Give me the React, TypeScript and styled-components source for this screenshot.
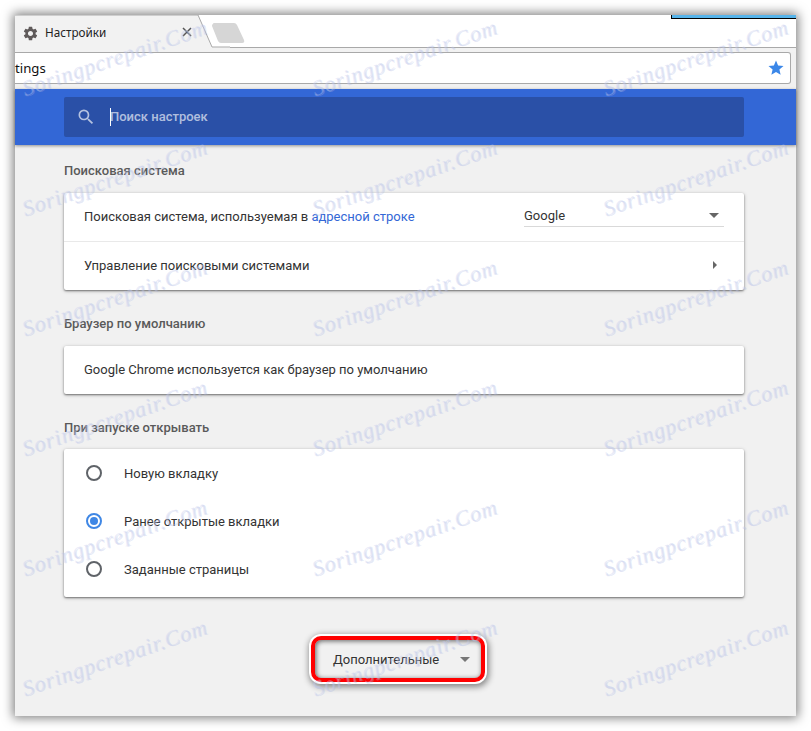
import React from "react";
import styled, { createGlobalStyle } from "styled-components";
import { MdSettings, MdStar, MdSearch } from "react-icons/md";

const Global = createGlobalStyle`
  html, body { margin: 0; padding: 0; background: #fff; }
  body { font-family: Roboto, "Noto Sans", sans-serif; }
`;

const Page = styled.div`
  position: relative;
  width: 811px;
  height: 731px;
  padding: 15px;
  box-sizing: border-box;
  overflow: hidden;
  background: #fff;
`;

const Window = styled.div`
  position: relative;
  width: 781px;
  height: 701px;
  display: flex;
  flex-direction: column;
  background: #f1f1f1;
  box-shadow: 0 0 10px 2px rgba(0, 0, 0, 0.5);
`;

const TabStrip = styled.div`
  position: relative;
  height: 37px;
  flex: none;
  background: linear-gradient(#fff 32px, #a9a9a9 32px, #a9a9a9 33px, #f2f2f2 33px);
`;

const TabShape = styled.svg`
  position: absolute;
  left: 0;
  top: 0;
`;

const Tab = styled.div`
  position: relative;
  width: 190px;
  height: 37px;
  display: flex;
  align-items: center;
  padding-left: 7px;
  box-sizing: border-box;
  color: #333;
`;

const TabTitle = styled.span`
  margin-left: 6px;
  margin-top: -4px;
  font: 11.7px "Noto Sans", sans-serif;
  color: #222;
`;

const CloseGlyph = styled.svg`
  position: absolute;
  left: 167px;
  top: 12px;
`;

const NewTab = styled.svg`
  position: absolute;
  left: 193px;
  top: 7px;
`;

const Loader = styled.div`
  position: absolute;
  right: 0;
  top: 0;
  width: 124px;
  height: 3px;
  background: #56b4ea;
  border-left: 1px solid #000;
  border-bottom: 1px solid #000;
`;

const Toolbar = styled.div`
  height: 37px;
  flex: none;
  padding-right: 5px;
`;

const Omnibox = styled.div`
  height: 32px;
  box-sizing: border-box;
  background: #fff;
  border: 1px solid #a9a9a9;
  border-left: none;
  border-radius: 0 3px 3px 0;
  display: flex;
  align-items: center;
  justify-content: space-between;
  padding-right: 5px;
  color: #111;
  font: 13.2px "Noto Sans", sans-serif;
`;

const UrlTail = styled.span`
  margin-top: -1px;
`;

const Star = styled(MdStar)`
  color: #3b87e8;
  font-size: 18px;
`;

const Banner = styled.div`
  height: 56px;
  flex: none;
  background: #3367d6;
  padding: 8px 52px 8px 49px;
  box-sizing: border-box;
  box-shadow: 0 1px 3px rgba(0, 0, 0, 0.4);
  position: relative;
`;

const SearchBox = styled.div`
  height: 40px;
  border-radius: 2px;
  background: #2a50a7;
  display: flex;
  align-items: center;
  padding-left: 12px;
  color: rgba(255, 255, 255, 0.65);
`;

const SearchIcon = styled(MdSearch)`
  font-size: 20px;
`;

const Caret = styled.span`
  width: 1px;
  height: 18px;
  margin-left: 14px;
  background: #fff;
`;

const SearchText = styled.span`
  margin-left: -1px;
  margin-top: -2px;
  font: 500 13px Roboto, sans-serif;
`;

const Content = styled.main`
  flex: 1;
  display: flex;
  flex-direction: column;
  padding: 0 52px 0 49px;
`;

const SectionTitle = styled.h2<{ $height: number; $top: number }>`
  margin: 0;
  height: ${(p) => p.$height}px;
  padding-top: ${(p) => p.$top}px;
  box-sizing: border-box;
  font: 500 13px/17px Roboto, sans-serif;
  color: #5a5a5a;
  flex: none;
`;

const Card = styled.section<{ $bottom?: number }>`
  background: #fff;
  border-radius: 2px;
  padding-bottom: ${(p) => p.$bottom ?? 0}px;
  box-shadow: 0 1px 2px rgba(0, 0, 0, 0.45), 0 1px 4px rgba(0, 0, 0, 0.2);
  flex: none;
`;

const Row = styled.div<{ $divided?: boolean }>`
  height: ${(p) => (p.$divided ? 49 : 48)}px;
  box-sizing: border-box;
  display: flex;
  align-items: center;
  padding: 0 20px 2px;
  font: 13px Roboto, sans-serif;
  color: #333;
  border-top: ${(p) => (p.$divided ? "1px solid #e9e9e9" : "none")};
`;

const RadioRow = styled(Row)`
  padding: 0 20px 0 22px;
`;

const RowLabel = styled.span`
  flex: 1;
`;

const InlineLink = styled.a`
  color: #3367d6;
`;

const Select = styled.div`
  width: 200px;
  height: 22px;
  box-sizing: border-box;
  border-bottom: 1px solid #d9d9d9;
  display: flex;
  align-items: center;
  justify-content: space-between;
  padding: 0 5px 0 0;
`;

const DownArrow = styled.span<{ $color?: string }>`
  width: 0;
  height: 0;
  border-left: 5px solid transparent;
  border-right: 5px solid transparent;
  border-top: 5px solid ${(p) => p.$color ?? "#666"};
`;

const RightArrow = styled.span`
  width: 0;
  height: 0;
  margin-right: 7px;
  border-top: 4px solid transparent;
  border-bottom: 4px solid transparent;
  border-left: 4px solid #666;
`;

const Radio = styled.span<{ $on?: boolean }>`
  width: 16px;
  height: 16px;
  margin-right: 22px;
  flex: none;
  box-sizing: border-box;
  border: 2px solid ${(p) => (p.$on ? "#3f87e5" : "#5f6368")};
  border-radius: 50%;
  display: flex;
  align-items: center;
  justify-content: center;
  &::after {
    content: "";
    display: ${(p) => (p.$on ? "block" : "none")};
    width: 8px;
    height: 8px;
    border-radius: 50%;
    background: #3f87e5;
  }
`;

const AdvancedRow = styled.div`
  display: flex;
  margin-top: 39px;
  padding-left: 247px;
`;

const Advanced = styled.button`
  width: 174px;
  height: 46px;
  box-sizing: border-box;
  background: #f1f1f1;
  border: 4px solid #f00;
  border-radius: 10px;
  outline: none;
  box-shadow: 0 0 0 2px #fff, 1px 2px 6px 3px rgba(0, 0, 0, 0.45),
    inset 1px 1px 5px rgba(0, 0, 0, 0.6);
  display: flex;
  align-items: center;
  justify-content: space-between;
  padding: 0 11px 0 18px;
  font: 13px Roboto, sans-serif;
  color: #333;
`;

const Watermark = styled.div`
  position: absolute;
  left: 0;
  top: 0;
  width: 811px;
  height: 731px;
  pointer-events: none;
  overflow: hidden;
`;

const Mark = styled.span<{ $x: number; $y: number }>`
  position: absolute;
  left: ${(p) => p.$x}px;
  top: ${(p) => p.$y}px;
  transform-origin: 0 100%;
  transform: rotate(-19deg);
  font: italic 22px "Liberation Serif", serif;
  letter-spacing: 0.9px;
  white-space: nowrap;
  color: rgba(195, 205, 238, 0.4);
  text-shadow: 1px 1px 0 rgba(170, 180, 225, 0.3);
`;

const cols = [27, 317, 608];
const rows = [76, 196, 316, 436, 556, 676];

const START_PAGES = [
  { label: "Новую вкладку", on: false },
  { label: "Ранее открытые вкладки", on: true },
  { label: "Заданные страницы", on: false },
];

export default function App() {
  return (
    <Page>
      <Global />
      <Window>
        <TabStrip>
          <TabShape width="215" height="37" viewBox="0 0 215 37">
            <path d="M0 37V0H183L197 32H215V33H197V37Z" fill="#f2f2f2" />
            <path d="M0 0H183L197 32H215" fill="none" stroke="#a9a9a9" strokeWidth="1" />
          </TabShape>
          <Tab>
            <MdSettings size={17} color="#5f5a5a" />
            <TabTitle>Настройки</TabTitle>
            <CloseGlyph width="10" height="10" viewBox="0 0 10 10">
              <path d="M1 1L9 9M9 1L1 9" stroke="#555" strokeWidth="1.5" />
            </CloseGlyph>
          </Tab>
          <NewTab width="40" height="24" viewBox="0 0 40 24">
            <path d="M5 2Q5 1 6 1H26Q28 1 29 3L36 18Q37 21 34 21H13Q11 21 10 19L4 4Q4 2 5 2Z" fill="#d6d6d6" />
          </NewTab>
          <Loader />
        </TabStrip>
        <Toolbar>
          <Omnibox>
            <UrlTail>tings</UrlTail>
            <Star />
          </Omnibox>
        </Toolbar>
        <Banner>
          <SearchBox>
            <SearchIcon />
            <Caret />
            <SearchText>Поиск настроек</SearchText>
          </SearchBox>
        </Banner>
        <Content>
          <SectionTitle $height={48} $top={17}>Поисковая система</SectionTitle>
          <Card>
            <Row>
              <RowLabel>
                Поисковая система, используемая в <InlineLink>адресной строке</InlineLink>
              </RowLabel>
              <Select>
                Google
                <DownArrow />
              </Select>
            </Row>
            <Row $divided>
              <RowLabel>Управление поисковыми системами</RowLabel>
              <RightArrow />
            </Row>
          </Card>
          <SectionTitle $height={56} $top={25}>Браузер по умолчанию</SectionTitle>
          <Card>
            <Row>Google Chrome используется как браузер по умолчанию</Row>
          </Card>
          <SectionTitle $height={55} $top={25}>При запуске открывать</SectionTitle>
          <Card $bottom={4}>
            {START_PAGES.map((o) => (
              <RadioRow key={o.label}>
                <Radio $on={o.on} />
                {o.label}
              </RadioRow>
            ))}
          </Card>
          <AdvancedRow>
            <Advanced>
              Дополнительные
              <DownArrow $color="#777" />
            </Advanced>
          </AdvancedRow>
        </Content>
      </Window>
      <Watermark>
        {rows.flatMap((y) =>
          cols.map((x) => (
            <Mark key={`${x}-${y}`} $x={x} $y={y}>
              Soringpcrepair.Com
            </Mark>
          ))
        )}
      </Watermark>
    </Page>
  );
}
